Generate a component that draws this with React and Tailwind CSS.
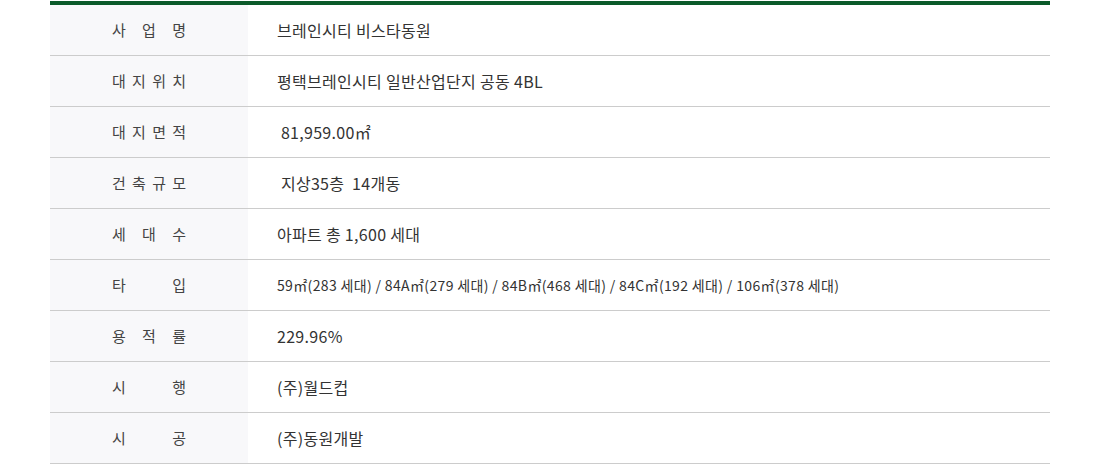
import React from 'react';

const rows = [
  { label: ['사', '업', '명'], value: '브레인시티 비스타동원' },
  { label: ['대', '지', '위', '치'], value: '평택브레인시티 일반산업단지 공동 4BL' },
  { label: ['대', '지', '면', '적'], value: ' 81,959.00㎡' },
  { label: ['건', '축', '규', '모'], value: ' 지상35층  14개동' },
  { label: ['세', '대', '수'], value: '아파트 총 1,600 세대' },
  {
    label: ['타', '입'],
    value: '59㎡(283 세대) / 84A㎡(279 세대) / 84B㎡(468 세대) / 84C㎡(192 세대) / 106㎡(378 세대)',
    small: true,
  },
  { label: ['용', '적', '률'], value: '229.96%' },
  { label: ['시', '행'], value: '(주)월드컵' },
  { label: ['시', '공'], value: '(주)동원개발' },
];

const App = () => {
  return (
    <div className="w-[1100px] bg-white pt-px font-['Noto_Sans_CJK_KR','Noto_Sans',sans-serif] text-[#333]">
      <div className="mx-[50px] border-t-4 border-[#0b5a2a]">
        {rows.map(({ label, value, small }, i) => (
          <div key={i} className="flex h-[51px] border-b border-[#cccccc]">
            <div className="flex w-[198px] items-center justify-center bg-[#f8f8fa]">
              <div className="flex w-[74px] justify-between text-[15px] text-[#444]">
                {label.map((ch, j) => (
                  <span key={j}>{ch}</span>
                ))}
              </div>
            </div>
            <div
              className={
                small
                  ? 'flex flex-1 items-center whitespace-pre pl-[29px] text-[14px] tracking-[0.35px] text-[#333]'
                  : 'flex flex-1 items-center whitespace-pre pl-[29px] text-[16px] tracking-[0.3px] text-[#333]'
              }
            >
              {value}
            </div>
          </div>
        ))}
      </div>
    </div>
  );
};

export default App;
